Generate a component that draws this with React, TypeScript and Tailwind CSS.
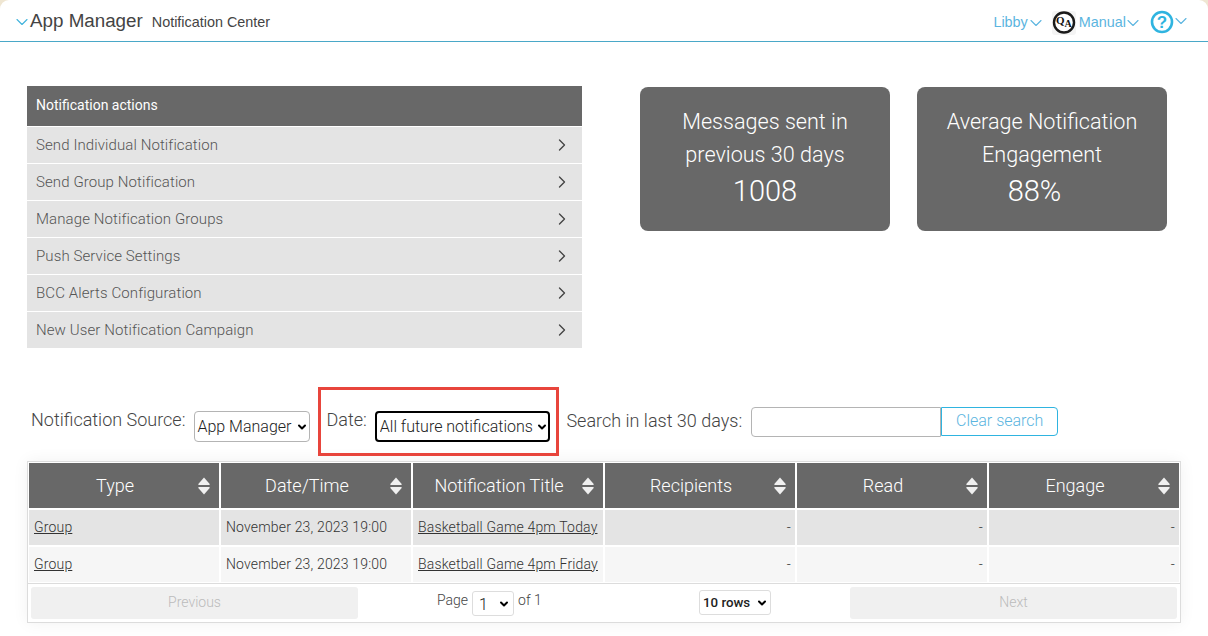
import React from "react";
import { ChevronDown, ChevronRight } from "lucide-react";

const actions = [
  "Send Individual Notification",
  "Send Group Notification",
  "Manage Notification Groups",
  "Push Service Settings",
  "BCC Alerts Configuration",
  "New User Notification Campaign",
];
const columns = ["Type", "Date/Time", "Notification Title", "Recipients", "Read", "Engage"];
const rows = [
  { title: "Basketball Game 4pm Today", bg: "bg-[#e4e4e4]" },
  { title: "Basketball Game 4pm Friday", bg: "bg-[#f6f6f6]" },
];

function Chev({ className }: { className: string }) {
  return <ChevronDown className={className} strokeWidth={1.3} />;
}

function SortIcon() {
  return (
    <svg width="12" height="18" viewBox="0 0 12 18" className="absolute right-[9px] top-[14px]">
      <path d="M6 0.5 L11.7 7 Q12 8 11 8 L1 8 Q0 8 0.3 7 Z" fill="#f0f0f0" />
      <path d="M1 10 L11 10 Q12 10 11.7 11 L6 17.5 L0.3 11 Q0 10 1 10 Z" fill="#f0f0f0" />
    </svg>
  );
}

function SelectBox({
  value,
  className,
  selectClass,
  arrowClass,
}: {
  value: string;
  className: string;
  selectClass: string;
  arrowClass: string;
}) {
  return (
    <div className={`relative ${className}`}>
      <select defaultValue={value} className={`h-full w-full appearance-none bg-white ${selectClass}`}>
        <option>{value}</option>
      </select>
      <ChevronDown className={`pointer-events-none absolute top-1/2 h-[12px] w-[12px] -translate-y-1/2 text-black ${arrowClass}`} strokeWidth={4} />
    </div>
  );
}

function Card({ lines, value, valueClass = "" }: { lines: string[]; value: string; valueClass?: string }) {
  return (
    <div className="flex h-[144px] w-[250px] flex-col items-center rounded-lg bg-[#686868] pt-[18px] font-light text-white">
      {lines.map((l) => (
        <div key={l} className="h-[33px] text-[21.6px] leading-[33px]">{l}</div>
      ))}
      <div className={`mt-[1px] text-[29px] leading-[38px] ${valueClass}`}>{value}</div>
    </div>
  );
}

export default function App() {
  return (
    <div className="h-[636px] w-[1208px] overflow-hidden bg-white font-['Roboto',sans-serif] text-[#444]">
      <div className="bg-[#efe6d2]">
        <header className="flex h-[42px] items-center justify-between rounded-t-[9px] border-b border-[#4aa8c8] bg-white pt-[2px] pr-[20px] pl-[12px] font-['Liberation_Sans',sans-serif]">
          <div className="flex items-center">
            <Chev className="h-[20px] w-[20px] text-[#3fb3dc]" />
            <span className="-ml-[2px] text-[18.8px] text-[#444]">App Manager</span>
            <span className="ml-[9px] mt-[3px] text-[14.4px] text-[#444]">Notification Center</span>
          </div>
          <div className="flex items-center text-[14.4px] text-[#5bb5e0]">
            <span className="mt-[2px]">Libby</span>
            <Chev className="-ml-[2px] mt-[2px] h-[20px] w-[20px]" />
            <svg width="24" height="24" viewBox="0 0 24 24" className="ml-[6px] mt-[3px]">
              <rect x="0" y="0" width="24" height="24" rx="3" fill="#f4f4f4" />
              <circle cx="12" cy="11.5" r="10" fill="white" stroke="#1a1a1a" strokeWidth="2.4" />
              <text x="4" y="13" fontSize="11" fontFamily="Liberation Serif" fontWeight="700" fill="#111">
                Q
                <tspan dy="3" fontSize="10">A</tspan>
              </text>
            </svg>
            <span className="ml-[3px] mt-[2px]">Manual</span>
            <Chev className="-ml-[3px] mt-[2px] h-[20px] w-[20px]" />
            <svg width="24" height="24" viewBox="0 0 24 24" className="ml-[7px] mt-[1px]">
              <circle cx="12" cy="12" r="10" fill="none" stroke="#2fb4e0" strokeWidth="2.6" />
              <text x="12" y="18" textAnchor="middle" fontSize="17" fontFamily="Liberation Sans" fontWeight="700" fill="#2fb4e0">?</text>
            </svg>
            <Chev className="-ml-[3px] -mr-[3px] mb-[2px] h-[20px] w-[20px]" />
          </div>
        </header>
      </div>

      <main className="pl-[27px]">
        <section className="mt-[44px] flex items-start">
          <div className="w-[555px]">
            <div className="flex h-[40px] items-center bg-[#686868] pb-[2px] pl-[9px] text-[14px] text-white">Notification actions</div>
            {actions.map((a) => (
              <div key={a} className="mt-[1px] flex h-[36px] items-center justify-between bg-[#e4e4e4] pr-[10px] pl-[9px] text-[15px] font-light tracking-[0.1px] text-[#555] first:mt-0 first:h-[37px] first:pt-[1px]">
                <span className="mt-[1px]">{a}</span>
                <ChevronRight className="h-[20px] w-[20px] text-[#444]" strokeWidth={1.6} />
              </div>
            ))}
          </div>
          <div className="ml-[58px] mt-[1px] flex gap-[27px]">
            <Card lines={["Messages sent in", "previous 30 days"]} value="1008" />
            <Card lines={["Average Notification", "Engagement"]} value="88%" valueClass="mr-[15px]" />
          </div>
        </section>

        <section className="mt-[39px] flex h-[69px] items-start whitespace-nowrap">
          <div className="ml-[4px] mt-[21px] text-[18px] font-light leading-[24px]">Notification Source:</div>
          <SelectBox
            value="App Manager"
            className="ml-[9px] mt-[24px] h-[31px] w-[116px]"
            selectClass="rounded-[4px] border border-[#b4b4b4] pl-[2px] text-[16px] font-light text-[#222]"
            arrowClass="right-[2px]"
          />
          <div className="ml-[8px] flex h-[69px] w-[241px] items-start border-[3px] border-[#e8453c]">
            <div className="ml-[5px] mt-[18px] text-[18px] font-light leading-[24px]">Date:</div>
            <SelectBox
              value="All future notifications"
              className="ml-[8px] mt-[21px] h-[31px] w-[175px]"
              selectClass="rounded-[4px] border-2 border-black pl-[3px] text-[16px] font-light text-[#222]"
              arrowClass="right-[2px]"
            />
          </div>
          <div className="ml-[7px] mt-[22px] text-[18px] font-light leading-[24px]">Search in last 30 days:</div>
          <input className="ml-[9px] mt-[20px] h-[30px] w-[190px] rounded-l-[4px] border border-[#b4b4b4] bg-white" />
          <button className="mt-[20px] h-[29px] w-[117px] rounded-r-[4px] border border-[#2fb4e0] bg-white pb-[2px] text-[16px] font-light text-[#5bb5e0]">Clear search</button>
        </section>

        <section className="mt-[5px] w-[1154px] border border-[#dcdcdc] bg-white shadow-[0_0_15px_rgba(0,0,0,0.06)]">
          <div className="grid grid-cols-6 gap-[2px] px-[1px] pt-[1px]">
            {columns.map((c) => (
              <div key={c} className="relative flex h-[45px] items-center justify-center bg-[#686868] pr-[18px] text-[18px] font-light text-white">
                {c}
                <SortIcon />
              </div>
            ))}
          </div>
          {rows.map((r) => (
            <div key={r.title} className="mt-[2px] grid grid-cols-6 gap-[2px] px-[1px] text-[14px] font-light leading-[35px] tracking-[0.17px] text-[#333]">
              <div className={`${r.bg} h-[35px] pl-[5px]`}><a className="underline">Group</a></div>
              <div className={`${r.bg} h-[35px] pl-[5px]`}>November 23, 2023 19:00</div>
              <div className={`${r.bg} h-[35px] pl-[5px]`}><a className="underline">{r.title}</a></div>
              <div className={`${r.bg} h-[35px] pr-[4px] text-right`}>-</div>
              <div className={`${r.bg} h-[35px] pr-[4px] text-right`}>-</div>
              <div className={`${r.bg} h-[35px] pr-[4px] text-right`}>-</div>
            </div>
          ))}
          <div className="mt-[1px] flex h-[39px] border-t border-[#dcdcdc] px-[3px] pt-[3px] whitespace-nowrap">
            <button disabled className="h-[32px] w-[327px] rounded-[3px] bg-[#f0f0f0] pb-[2px] text-[14px] font-light text-[#bbb]">Previous</button>
            <div className="ml-[79px] flex h-[32px] w-[158px] items-start text-[14px] font-light text-[#444]">
              <span className="mt-[3px]">Page</span>
              <SelectBox
                value="1"
                className="ml-[4px] mt-[4px] h-[25px] w-[42px]"
                selectClass="rounded-[3px] border border-[#ddd] pt-[1px] pl-[6px] text-[16px] font-light text-[#222]"
                arrowClass="right-[4px]"
              />
              <span className="ml-[4px] mt-[3px]">of 1</span>
            </div>
            <SelectBox
              value="10 rows"
              className="ml-[104px] mt-[3px] h-[25px] w-[72px]"
              selectClass="rounded-[3px] border border-[#ddd] pl-[3px] text-[13.3px] font-medium text-[#222]"
              arrowClass="right-[3px]"
            />
            <button disabled className="ml-[79px] h-[32px] w-[327px] rounded-[3px] bg-[#f0f0f0] pb-[2px] text-[14px] font-light text-[#bbb]">Next</button>
          </div>
        </section>
      </main>
    </div>
  );
}
